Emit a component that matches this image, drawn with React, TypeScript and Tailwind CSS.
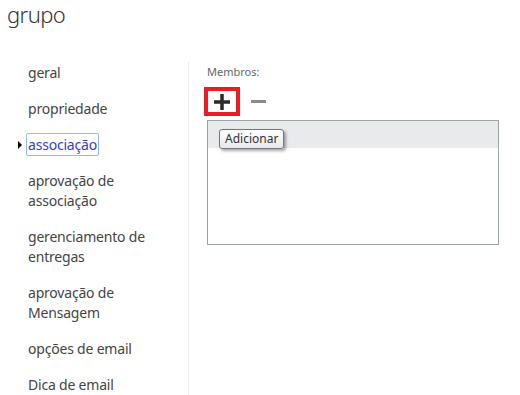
import React from "react";

const font = { fontFamily: '"Noto Sans", "Open Sans", sans-serif' };

export default function App() {
  const items: React.ReactNode[] = [
    "geral",
    "propriedade",
    "associação",
    <>aprovação de<br />associação</>,
    <>gerenciamento de<br />entregas</>,
    <>aprovação de<br />Mensagem</>,
    "opções de email",
    "Dica de email",
  ];
  return (
    <div className="w-[520px] h-[395px] bg-white overflow-hidden text-[#333]" style={font}>
      <div className="pl-[7px] h-[62px] text-[22px] tracking-[-0.6px] font-light leading-[28px] text-[#333]">grupo</div>
      <div className="flex">
        <div className="w-[189px] border-r border-[#e8e8e8] h-[340px] pl-[28px] pt-[1px]">
          {items.map((it, i) => (
            <div key={i} className="relative text-[14px] tracking-[-0.2px] leading-[20px] mb-[16px] text-[#444]">
              {i === 2 ? (
                <>
                  <span className="absolute left-[-10px] top-[6px] w-0 h-0 border-y-[4px] border-y-transparent border-l-[4px] border-l-black" />
                  <span className="ml-[-2px] px-[1px] py-[1px] rounded-[2px] border border-[#8fb8f5] text-[#3b3bbf]">{it}</span>
                </>
              ) : (
                it
              )}
            </div>
          ))}
        </div>
        <div className="pl-[18px] pt-[3px] flex-1">
          <div className="text-[11px] leading-[14px] text-[#666]">Membros:</div>
          <div className="flex items-center mt-[8px] ml-[-3px] h-[29px]">
            <div className="w-[36px] h-[29px] border-[4px] border-[#ed1c24] flex items-center justify-center">
              <svg width="16" height="16" viewBox="0 0 16 16">
                <rect x="6.25" y="0" width="3.5" height="16" fill="#2a2a2a" />
                <rect x="0" y="6.25" width="16" height="3.5" fill="#2a2a2a" />
              </svg>
            </div>
            <svg width="15" height="3" viewBox="0 0 15 3" className="ml-[11px]">
              <rect x="0" y="0" width="15" height="3" fill="#8a8a8a" />
            </svg>
          </div>
          <div className="relative mt-[4px] w-[292px] h-[125px] border border-[#9aa5a3]">
            <div className="h-[27px] bg-[#e9eaec]" />
            <div className="absolute left-[11px] top-[8px] h-[20px] px-[5px] flex items-center text-[12px] text-[#333] rounded-[3px] border border-[#767676] bg-gradient-to-b from-white to-[#e8e8ee] shadow-[2px_2px_3px_rgba(0,0,0,0.35)]">
              Adicionar
            </div>
          </div>
        </div>
      </div>
    </div>
  );
}
